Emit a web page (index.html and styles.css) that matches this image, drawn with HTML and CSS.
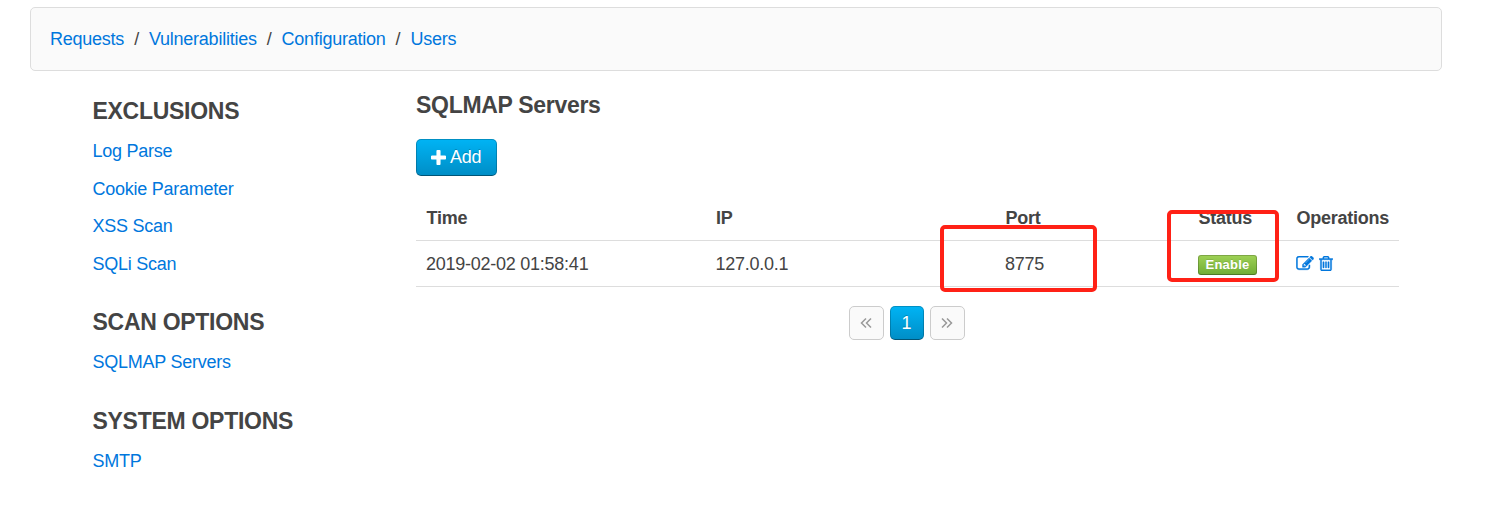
FILE: index.html
```html
<!DOCTYPE html>
<html lang="en">
<head>
<meta charset="utf-8">
<title>SQLMAP Servers</title>
<link rel="stylesheet" href="styles.css">
</head>
<body>
<nav class="navbar">
  <a>Requests</a><span class="sep">/</span><a>Vulnerabilities</a><span class="sep">/</span><a>Configuration</a><span class="sep">/</span><a>Users</a>
</nav>
<div class="layout">
  <aside class="sidebar">
    <section class="group">
      <h3 class="group-title">EXCLUSIONS</h3>
      <a>Log Parse</a>
      <a>Cookie Parameter</a>
      <a>XSS Scan</a>
      <a>SQLi Scan</a>
    </section>
    <section class="group">
      <h3 class="group-title">SCAN OPTIONS</h3>
      <a>SQLMAP Servers</a>
    </section>
    <section class="group">
      <h3 class="group-title">SYSTEM OPTIONS</h3>
      <a>SMTP</a>
    </section>
  </aside>
  <main class="content">
    <h3 class="title">SQLMAP Servers</h3>
    <button class="button"><svg class="plus" viewBox="192 128 1408 1408"><path d="M1600 736v192q0 40-28 68t-68 28h-416v416q0 40-28 68t-68 28h-192q-40 0-68-28t-28-68v-416h-416q-40 0-68-28t-28-68v-192q0-40 28-68t68-28h416v-416q0-40 28-68t68-28h192q40 0 68 28t28 68v416h416q40 0 68 28t28 68z"/></svg><span>Add</span></button>
    <div class="table">
      <div class="row head">
        <span>Time</span><span>IP</span><span>Port</span><span>Status</span><span>Operations</span>
      </div>
      <div class="row">
        <span>2019-02-02 01:58:41</span><span>127.0.0.1</span>
        <span class="cell">8775<i class="mark mark-port"></i></span>
        <span class="cell"><b class="badge">Enable</b><i class="mark mark-status"></i></span>
        <span class="ops">
          <svg class="edit" viewBox="0 128 1792 1536"><path d="M888 1184l116-116-152-152-116 116v56h96v96h56zm440-720q-16-16-33 1l-350 350q-17 17-1 33t33-1l350-350q17-17 1-33zm80 594v190q0 119-84.5 203.5t-203.5 84.5h-832q-119 0-203.5-84.5t-84.5-203.5v-832q0-119 84.5-203.5t203.5-84.5h832q63 0 117 25 15 7 18 23 3 17-9 29l-49 49q-14 14-32 8-23-6-45-6h-832q-66 0-113 47t-47 113v832q0 66 47 113t113 47h832q66 0 113-47t47-113v-126q0-13 9-22l64-64q15-15 35-7t20 29zm-96-738l288 288-672 672h-288v-288zm444 132l-92 92-288-288 92-92q28-28 68-28t68 28l152 152q28 28 28 68t-28 68z"/></svg>
          <svg class="trash" viewBox="192 128 1408 1536"><path d="M704 736v576q0 14-9 23t-23 9h-64q-14 0-23-9t-9-23v-576q0-14 9-23t23-9h64q14 0 23 9t9 23zm256 0v576q0 14-9 23t-23 9h-64q-14 0-23-9t-9-23v-576q0-14 9-23t23-9h64q14 0 23 9t9 23zm256 0v576q0 14-9 23t-23 9h-64q-14 0-23-9t-9-23v-576q0-14 9-23t23-9h64q14 0 23 9t9 23zm128 724v-948h-896v948q0 22 7 40.5t14.5 27 10.5 8.5h832q3 0 10.5-8.5t14.5-27 7-40.5zm-672-1076h448l-48-117q-7-9-17-11h-317q-10 2-17 11zm928 32v64q0 14-9 23t-23 9h-96v948q0 83-47 143.5t-113 60.5h-832q-66 0-113-58.5t-47-141.5v-952h-96q-14 0-23-9t-9-23v-64q0-14 9-23t23-9h309l70-167q15-37 54-63t79-26h320q40 0 79 26t54 63l70 167h309q14 0 23 9t9 23z"/></svg>
        </span>
      </div>
    </div>
    <div class="pagination">
      <span class="page"><svg class="chev" viewBox="0 0 12 12"><path d="M6 1.5 1.5 6 6 10.5M11 1.5 6.5 6 11 10.5"/></svg></span>
      <span class="page active">1</span>
      <span class="page"><svg class="chev" viewBox="0 0 12 12"><path d="M1 1.5 5.5 6 1 10.5M6 1.5 10.5 6 6 10.5"/></svg></span>
    </div>
  </main>
</div>
</body>
</html>
```
FILE: styles.css
```css
* { box-sizing: border-box; }
body {
  margin: 0;
  padding: 7px 45px 0 30px;
  background: #fff;
  color: #444;
  font: 18px/25px "Liberation Sans", Arial, sans-serif;
  letter-spacing: -0.25px;
}
a { color: #07d; text-decoration: none; }
h3 { margin: 0; font-size: 23px; line-height: 28px; font-weight: bold; letter-spacing: -0.28px; }
.navbar {
  display: flex;
  align-items: center;
  height: 64px;
  padding: 0 19px;
  background: #fafafa;
  border: 1px solid #ddd;
  border-radius: 5px;
}
.sep { margin: 0 10.1px; }
.layout { display: flex; }
.sidebar { width: 386px; padding: 26px 0 0 62.5px; }
.group { display: flex; flex-direction: column; margin-bottom: 31.4px; }
.group-title { margin-bottom: 14px; }
.group a { height: 37.6px; line-height: 25px; }
.group a:last-child { height: 25px; }
.content { width: 983px; padding-top: 20px; }
.button {
  display: flex;
  align-items: center;
  gap: 4px;
  width: 81px;
  height: 37px;
  margin: 20px 0 19px;
  padding: 0 0 1px 15px;
  border: 1px solid rgba(0,0,0,.2);
  border-bottom-color: rgba(0,0,0,.4);
  border-radius: 5px;
  background: linear-gradient(#00b4f5, #008dc5) border-box;
  color: #fff;
  font: inherit;
  letter-spacing: -0.25px;
  text-shadow: 0 -1px 0 rgba(0,0,0,.2);
}
.title { letter-spacing: -0.3px; }
.plus { width: 15px; height: 15px; margin-left: -1px; fill: #fff; }
.row {
  display: grid;
  grid-template-columns: 289.5px 289.5px 193px 98px 1fr;
  height: 46px;
  align-items: center;
  padding: 2px 0 0 10px;
  border-bottom: 1px solid #ddd;
}
.cell { position: relative; display: flex; align-items: center; height: 25px; }
.head { padding-left: 10.5px; font-weight: bold; }
.badge {
  width: 59px;
  height: 20px;
  border: 1px solid rgba(0,0,0,.2);
  border-bottom-color: rgba(0,0,0,.3);
  border-radius: 3px;
  background: linear-gradient(#9fd256, #6fac34) border-box;
  color: #fff;
  font-size: 13px;
  line-height: 18px;
  text-align: center;
  letter-spacing: .2px;
  text-shadow: 0 -1px 0 rgba(0,0,0,.1);
}
.mark { position: absolute; border: 4px solid #ff2116; border-radius: 5px; }
.mark-port { left: -65px; top: -27px; width: 157px; height: 67px; }
.mark-status { left: -31px; top: -42px; width: 112px; height: 72px; }
.ops { display: flex; align-items: center; gap: 5px; padding-bottom: 2px; fill: #07d; stroke: #07d; stroke-width: 40; }
.edit { width: 18px; height: 15px; }
.trash { width: 14px; height: 15px; }
.pagination { display: flex; justify-content: center; gap: 6px; margin: 19px 2px 0 0; }
.page {
  display: flex;
  align-items: center;
  justify-content: center;
  width: 35px;
  height: 34px;
  border: 1px solid #ccc;
  border-radius: 5px;
  background: #fafafa;
}
.page.active {
  width: 34px;
  border-color: rgba(0,0,0,.2);
  border-bottom-color: rgba(0,0,0,.4);
  background: linear-gradient(#00b4f5, #008dc5) border-box;
  color: #fff;
  text-shadow: 0 -1px 0 rgba(0,0,0,.2);
}
.chev { width: 12px; height: 12px; fill: none; stroke: #999; stroke-width: 1.5; }
```
